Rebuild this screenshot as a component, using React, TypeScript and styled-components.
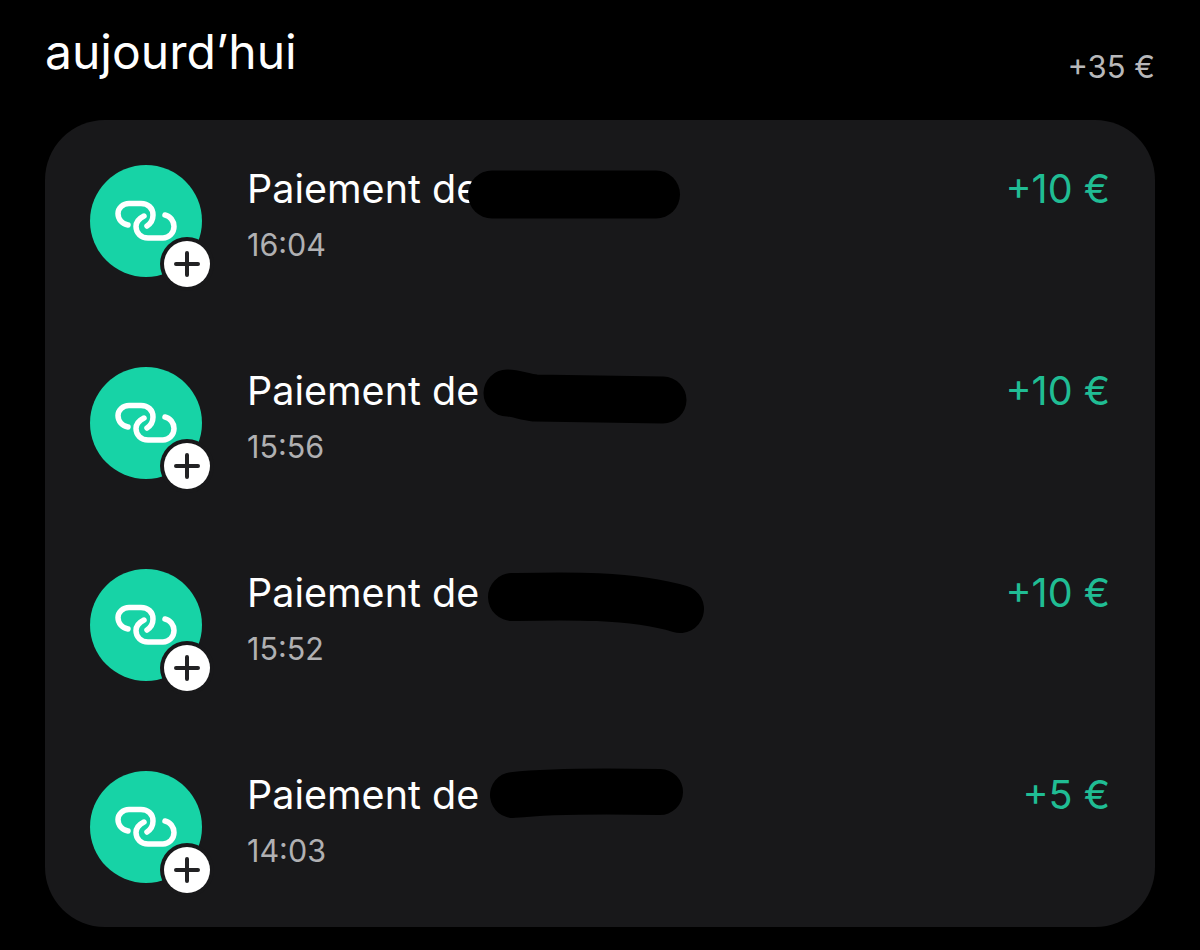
import React from 'react';
import styled, { createGlobalStyle } from 'styled-components';

const GlobalStyle = createGlobalStyle`
  html, body {
    margin: 0;
    background: #000;
    font-family: Inter, "Liberation Sans", sans-serif;
  }
`;

const Page = styled.main`
  width: 1200px;
  height: 950px;
  padding: 0 45px;
  box-sizing: border-box;
  background: #000;
  overflow: hidden;
`;

const Header = styled.header`
  height: 120px;
  display: flex;
  justify-content: space-between;
`;

const Heading = styled.h1`
  margin: 26px 0 0;
  font-size: 48px;
  line-height: 52px;
  font-weight: 400;
  color: #fff;
`;

const Total = styled.span`
  margin-top: 48px;
  font-size: 31px;
  line-height: 38px;
  color: #b8b8ba;
`;

const Card = styled.section`
  height: 807px;
  padding: 45px;
  box-sizing: border-box;
  display: flex;
  flex-direction: column;
  gap: 90px;
  background: #18181a;
  border-radius: 60px;
`;

const Row = styled.div`
  height: 112px;
  display: flex;
  align-items: flex-start;
  position: relative;
`;

const Avatar = styled.div`
  flex: none;
  width: 112px;
  height: 112px;
  border-radius: 50%;
  background: #17d3a6;
  position: relative;
`;

const Badge = styled.div`
  position: absolute;
  left: 74px;
  top: 76px;
  width: 46px;
  height: 46px;
  border-radius: 50%;
  background: #fff;
  box-shadow: 0 0 0 4px #18181a;
  display: flex;
  align-items: center;
  justify-content: center;
`;

const Body = styled.div`
  margin-left: 45px;
  flex: 1;
  display: flex;
  flex-direction: column;
`;

const Title = styled.div`
  font-size: 39.5px;
  line-height: 48px;
  color: #fff;
`;

const Time = styled.div`
  margin-top: 8px;
  font-size: 30.5px;
  line-height: 48px;
  color: #b0b0b2;
`;

const Amount = styled.div`
  font-size: 39.5px;
  line-height: 48px;
  color: #20bd94;
`;

// the black marker strokes over the names
const Scrawl = styled.svg`
  position: absolute;
  left: 350px;
  top: -10px;
  width: 300px;
  height: 90px;
  pointer-events: none;
`;

const LinkIcon = () => (
  <svg width="112" height="112" viewBox="0 0 112 112" fill="none" stroke="#fff" strokeWidth="5.5" strokeLinecap="round">
    <path d="M38 60C32 59 28 54 28 48.5C28 43 33 38.5 39 38.5H51C58 38.5 63 43 63 50C63 55 60 59 57 61" />
    <path d="M75 50C80 51 84 56 84 61.5C84 68 79 73 73 73H58C51 73 46 68 46 61.5C46 57 50 53 54 51" />
  </svg>
);

const PlusIcon = () => (
  <svg width="26" height="26" viewBox="0 0 26 26" fill="none" stroke="#222224" strokeWidth="4" strokeLinecap="round">
    <path d="M13 2V24M2 13H24" />
  </svg>
);

// coordinates are relative to the scrawl box: x = page x - 440, y = row y + 10
const payments = [
  { time: '16:04', amount: '+10 €', mark: 'M52 39.5H216', width: 48 },
  { time: '15:56', amount: '+10 €', mark: 'M67 36C75 36 85 40 95 41L223 43', width: 47 },
  { time: '15:52', amount: '+10 €', mark: 'M72 38C120 37 190 35 240 50', width: 48 },
  { time: '14:03', amount: '+5 €', mark: 'M73 34C110 30 170 30 220 31', width: 46 },
];

const Payment = ({ time, amount, mark, width }: typeof payments[number]) => (
  <Row>
    <Avatar>
      <LinkIcon />
      <Badge>
        <PlusIcon />
      </Badge>
    </Avatar>
    <Body>
      <Title>Paiement de</Title>
      <Time>{time}</Time>
    </Body>
    <Amount>{amount}</Amount>
    <Scrawl viewBox="0 0 300 90" fill="none" stroke="#000" strokeWidth={width} strokeLinecap="round" strokeLinejoin="round">
      <path d={mark} />
    </Scrawl>
  </Row>
);

const App: React.FC = () => (
  <Page>
    <GlobalStyle />
    <Header>
      <Heading>aujourd’hui</Heading>
      <Total>+35 €</Total>
    </Header>
    <Card>
      {payments.map(p => <Payment key={p.time} {...p} />)}
    </Card>
  </Page>
);

export default App;
